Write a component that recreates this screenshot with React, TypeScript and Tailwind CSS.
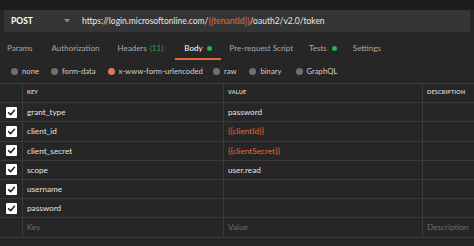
import React from "react";

const Check = () => (
  <div className="w-[11px] h-[11px] bg-white rounded-[1px] flex items-center justify-center">
    <svg width="9" height="9" viewBox="0 0 10 10">
      <path d="M1.8 5.2 L4 7.4 L8.3 2.6" stroke="#222" strokeWidth="1.7" fill="none" strokeLinecap="round" strokeLinejoin="round" />
    </svg>
  </div>
);

const rows: { k: string; v: string; orange?: boolean }[] = [
  { k: "grant_type", v: "password" },
  { k: "client_id", v: "{{clientId}}", orange: true },
  { k: "client_secret", v: "{{clientSecret}}", orange: true },
  { k: "scope", v: "user.read" },
  { k: "username", v: "" },
  { k: "password", v: "" },
];

const Radio = ({ label, active }: { label: string; active?: boolean }) => (
  <div className="flex items-center gap-[4px]">
    <div className={active ? "w-[7px] h-[7px] rounded-full bg-[#e0785a]" : "w-[7px] h-[7px] rounded-full bg-[#707070]"} />
    <span className="text-[#cfcfcf]">{label}</span>
  </div>
);

const GRID = "grid grid-cols-[23px_201px_199px_51px] h-[19.2px] border-b border-[#3a3a3a]";

export default function App() {
  return (
    <div
      className="w-[474px] h-[246px] bg-[#262626] overflow-hidden text-[8px] leading-none"
      style={{ fontFamily: "Lato, 'Open Sans', sans-serif" }}
    >
      <div className="h-[10px] bg-[#1c1c1c]" />
      <div className="px-[4px]">
        <div className="h-[22px] bg-[#353535] flex items-center">
          <div className="w-[74px] flex items-center pl-[7px] pr-[8px] justify-between">
            <span className="text-white font-bold text-[8.5px]">POST</span>
            <svg width="6" height="4" viewBox="0 0 6 4"><path d="M0 0 L6 0 L3 3.5Z" fill="#8a8a8a" /></svg>
          </div>
          <div className="pl-[4px] text-[#e6e6e6] text-[8.5px]">
            https://login.microsoftonline.com/<span className="text-[#e36b3d]">{"{{tenantId}}"}</span>/oauth2/v2.0/token
          </div>
        </div>
      </div>
      <div className="h-[26px] flex items-stretch pl-[7px] text-[8px] text-[#a9a9a9] mt-[3px]">
        <div className="flex items-center mr-[19px]">Params</div>
        <div className="flex items-center mr-[18px]">Authorization</div>
        <div className="flex items-center mr-[12px]">
          Headers <span className="text-[#3e9b4f] ml-[3px]">(11)</span>
        </div>
        <div className="relative flex items-center px-[9px] mr-[9px] text-white">
          Body<span className="ml-[4px] w-[5px] h-[5px] rounded-full bg-[#2bb24c]" />
          <div className="absolute left-0 right-0 bottom-[1px] h-[2px] bg-[#e0683a]" />
        </div>
        <div className="flex items-center mr-[16px]">Pre-request Script</div>
        <div className="flex items-center mr-[16px]">
          Tests<span className="ml-[5px] w-[5px] h-[5px] rounded-full bg-[#2bb24c]" />
        </div>
        <div className="flex items-center">Settings</div>
      </div>
      <div className="h-[22px] flex items-center pl-[11px] text-[7.7px]">
        <div className="mr-[12px]"><Radio label="none" /></div>
        <div className="mr-[12px]"><Radio label="form-data" /></div>
        <div className="mr-[10px]"><Radio label="x-www-form-urlencoded" active /></div>
        <div className="mr-[13px]"><Radio label="raw" /></div>
        <div className="mr-[14px]"><Radio label="binary" /></div>
        <Radio label="GraphQL" />
      </div>
      <div className="border-t border-[#3a3a3a]">
        <div className={GRID + " text-[5.5px] font-bold text-[#cfcfcf] tracking-[0.2px]"}>
          <div className="border-r border-[#3a3a3a]" />
          <div className="border-r border-[#3a3a3a] flex items-center pl-[4px]">KEY</div>
          <div className="border-r border-[#3a3a3a] flex items-center pl-[4px]">VALUE</div>
          <div className="flex items-center pl-[4px]">DESCRIPTION</div>
        </div>
        {rows.map((r) => (
          <div key={r.k} className={GRID + " text-[8.2px] text-[#e2e2e2]"}>
            <div className="border-r border-[#3a3a3a] flex items-center justify-center pl-[1px]">
              <Check />
            </div>
            <div className="border-r border-[#3a3a3a] flex items-center pl-[4px]">{r.k}</div>
            <div className={r.orange ? "border-r border-[#3a3a3a] flex items-center pl-[4px] text-[#e36b3d]" : "border-r border-[#3a3a3a] flex items-center pl-[4px]"}>{r.v}</div>
            <div />
          </div>
        ))}
        <div className={GRID + " text-[8.2px] text-[#6c6c6c]"}>
          <div className="border-r border-[#3a3a3a]" />
          <div className="border-r border-[#3a3a3a] flex items-center pl-[4px]">Key</div>
          <div className="border-r border-[#3a3a3a] flex items-center pl-[4px]">Value</div>
          <div className="flex items-center pl-[4px]">Description</div>
        </div>
      </div>
    </div>
  );
}
